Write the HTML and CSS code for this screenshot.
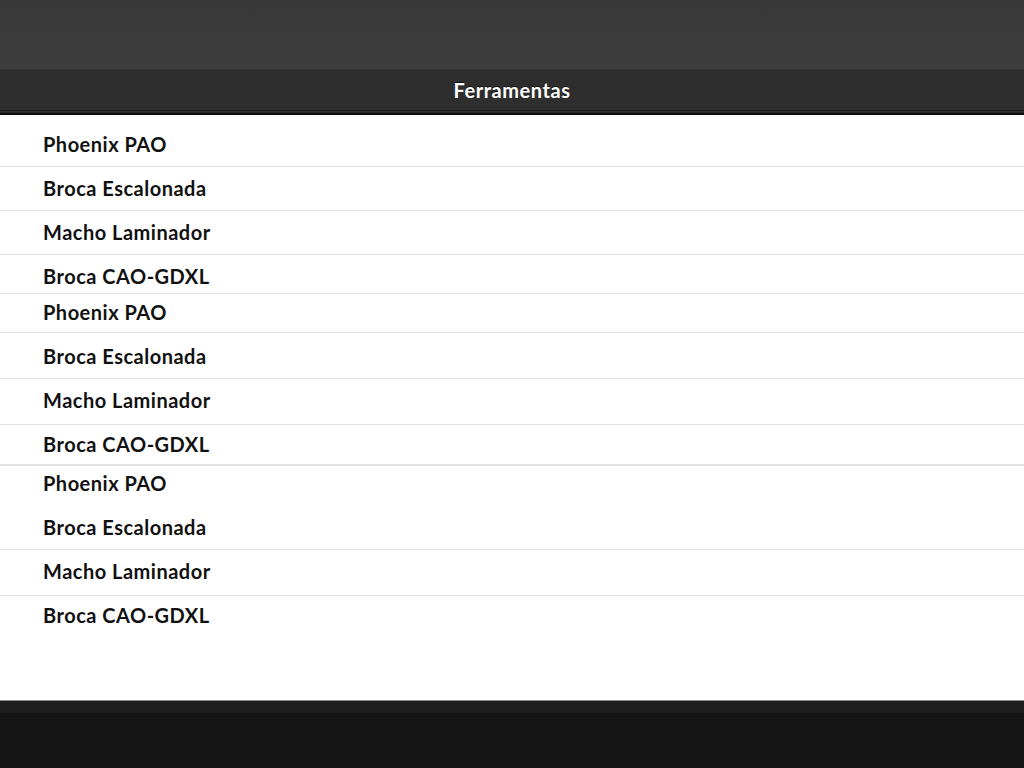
FILE: index.html
```html
<!DOCTYPE html>
<html lang="pt">
<head>
<meta charset="utf-8">
<title>Ferramentas</title>
<link rel="stylesheet" href="styles.css">
</head>
<body>
<div class="app">
  <header class="statusbar"></header>
  <div class="navbar"><h1 class="nav-title">Ferramentas</h1></div>
  <ul class="list">
    <li class="row">Phoenix PAO</li>
    <li class="row">Broca Escalonada</li>
    <li class="row">Macho Laminador</li>
    <li class="row">Broca CAO-GDXL</li>
    <li class="row">Phoenix PAO</li>
    <li class="row">Broca Escalonada</li>
    <li class="row">Macho Laminador</li>
    <li class="row">Broca CAO-GDXL</li>
    <li class="row">Phoenix PAO</li>
    <li class="row">Broca Escalonada</li>
    <li class="row">Macho Laminador</li>
    <li class="row">Broca CAO-GDXL</li>
  </ul>
  <footer class="toolbar"></footer>
</div>
</body>
</html>
```
FILE: styles.css
```css
html, body {
  margin: 0;
  padding: 0;
  background: #151515;
}
.app {
  width: 1024px;
  height: 768px;
  display: flex;
  flex-direction: column;
  font-family: Lato, "Open Sans", sans-serif;
}
.statusbar {
  height: 68px;
  flex: none;
  background: linear-gradient(180deg, #393939 0%, #3c3c3c 100%);
  border-bottom: 1px solid #404040;
}
.navbar {
  height: 41px;
  flex: none;
  background: #2e2e2e;
  border-bottom: 1px solid #1a1a1a;
  box-shadow: 0 1px 0 #303030, 0 2px 0 #262626, 0 4px 0 #0e0e0e;
  display: flex;
  align-items: center;
  justify-content: center;
  position: relative;
  z-index: 1;
}
.nav-title {
  margin: 0;
  color: #fff;
  font-size: 20px;
  font-weight: 700;
  letter-spacing: 0.55px;
  text-shadow: 0 -1px 0 rgba(0,0,0,0.6);
  line-height: 24px;
}
.list {
  list-style: none;
  margin: 4px 0 0 0;
  padding: 0;
  flex: 1;
  background: #fff;
  overflow: hidden;
}
.row {
  box-sizing: border-box;
  padding-left: 43px;
  font-size: 20px;
  font-weight: 700;
  color: #111;
  line-height: 22px;
  border-bottom: 1px solid #e2e2e2;
  letter-spacing: 0.5px;
}
.row:nth-child(1)  { height: 52px; padding-top: 18px; }
.row:nth-child(2)  { height: 44px; padding-top: 10px; }
.row:nth-child(3)  { height: 44px; padding-top: 10px; }
.row:nth-child(4)  { height: 39px; padding-top: 10px; }
.row:nth-child(5)  { height: 39px; padding-top: 7px; }
.row:nth-child(6)  { height: 46px; padding-top: 12px; }
.row:nth-child(7)  { height: 46px; padding-top: 10px; }
.row:nth-child(8)  { height: 41px; padding-top: 8px; border-bottom-width: 2px; }
.row:nth-child(9)  { height: 44px; padding-top: 6px; border-bottom: none; }
.row:nth-child(10) { height: 40px; padding-top: 6px; }
.row:nth-child(11) { height: 46px; padding-top: 10px; }
.row:nth-child(12) { padding-top: 8px; border-bottom: none; }
.toolbar {
  height: 67px;
  flex: none;
  background: #151515;
  border-top: 1px solid #8a8a8a;
  box-shadow: inset 0 12px 0 #1e1e1e;
}
```
